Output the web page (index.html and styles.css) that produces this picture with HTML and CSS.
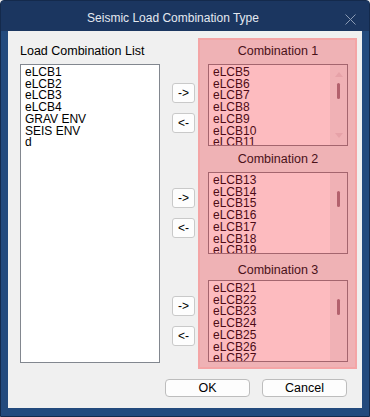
FILE: index.html
```html
<!DOCTYPE html>
<html lang="en">
<head>
  <meta charset="UTF-8" />
  <title>Seismic Load Combination Type</title>
  <link rel="stylesheet" href="styles.css">
</head>
<body>
  <div class="window">
    <div class="titlebar">
      <span class="title">Seismic Load Combination Type</span>
      <svg class="close" width="11" height="11" viewBox="0 0 11 11">
        <path d="M0.5 0.5 L10.5 10.5 M10.5 0.5 L0.5 10.5" stroke="#8b9bb4" stroke-width="1" fill="none"/>
      </svg>
    </div>

    <div class="content">
      <div class="main">
        <div class="source">
          <div class="label">Load Combination List</div>
          <div class="list list-white">
            <div class="items">
              <div>eLCB1</div>
              <div>eLCB2</div>
              <div>eLCB3</div>
              <div>eLCB4</div>
              <div>GRAV ENV</div>
              <div>SEIS ENV</div>
              <div>d</div>
            </div>
          </div>
        </div>

        <div class="movers">
          <div class="pair pair-first">
            <button class="move">-&gt;</button>
            <button class="move">&lt;-</button>
          </div>
          <div class="pair">
            <button class="move">-&gt;</button>
            <button class="move">&lt;-</button>
          </div>
          <div class="pair">
            <button class="move">-&gt;</button>
            <button class="move">&lt;-</button>
          </div>
        </div>

        <div class="panel">
          <div class="group">
            <div class="glabel">Combination 1</div>
            <div class="list list-pink">
              <div class="items">
                <div>eLCB5</div>
                <div>eLCB6</div>
                <div>eLCB7</div>
                <div>eLCB8</div>
                <div>eLCB9</div>
                <div>eLCB10</div>
                <div>eLCB11</div>
              </div>
              <div class="scrollbar">
                <span class="arrow arrow-up"></span>
                <span class="thumb"></span>
                <span class="arrow arrow-down"></span>
              </div>
            </div>
          </div>

          <div class="group">
            <div class="glabel">Combination 2</div>
            <div class="list list-pink">
              <div class="items">
                <div>eLCB13</div>
                <div>eLCB14</div>
                <div>eLCB15</div>
                <div>eLCB16</div>
                <div>eLCB17</div>
                <div>eLCB18</div>
                <div>eLCB19</div>
              </div>
              <div class="scrollbar">
                <span class="thumb thumb-plain"></span>
              </div>
            </div>
          </div>

          <div class="group">
            <div class="glabel">Combination 3</div>
            <div class="list list-pink">
              <div class="items">
                <div>eLCB21</div>
                <div>eLCB22</div>
                <div>eLCB23</div>
                <div>eLCB24</div>
                <div>eLCB25</div>
                <div>eLCB26</div>
                <div>eLCB27</div>
              </div>
              <div class="scrollbar">
                <span class="thumb thumb-plain"></span>
              </div>
            </div>
          </div>
        </div>
      </div>

      <div class="actions">
        <button class="action">OK</button>
        <button class="action">Cancel</button>
      </div>
    </div>
  </div>
</body>
</html>
```

FILE: styles.css
```css
body {
  margin: 0;
  font-family: 'Liberation Sans', Arial, sans-serif;
  background: #f0f0f0;
}

.window {
  width: 370px;
  height: 417px;
  box-sizing: border-box;
  border: 1px solid #142a4c;
  border-radius: 4px 4px 0 0;
  background: #234a7d;
  display: flex;
  flex-direction: column;
  overflow: hidden;
}

.titlebar {
  height: 30px;
  flex-shrink: 0;
  background: #1b3660;
  display: flex;
  align-items: flex-start;
}

.title {
  flex: 1;
  text-align: center;
  font-size: 12px;
  line-height: 12px;
  margin-top: 11px;
  color: #e4e9f1;
}

.close {
  margin: 13px 13px 0 0;
}

.content {
  flex: 1;
  margin: 0 7px 8px 7px;
  background: #f0f0f0;
  padding: 7px 5px 0 12px;
  display: flex;
  flex-direction: column;
}

.main {
  display: flex;
  height: 331px;
}

/* left column */
.source {
  width: 140px;
  display: flex;
  flex-direction: column;
}

.label {
  height: 26px;
  line-height: 26px;
  font-size: 12.5px;
  color: #000;
}

.list {
  box-sizing: border-box;
  display: flex;
  overflow: hidden;
}

.list-white {
  height: 299px;
  background: #fff;
  border: 1px solid #82878f;
  color: #000;
}

.items {
  flex: 1;
  padding: 2px 0 0 4px;
  font-size: 12px;
  line-height: 11.7px;
  white-space: nowrap;
  overflow: hidden;
}

/* move buttons */
.movers {
  width: 23px;
  margin: 0 3px 0 12px;
  padding-top: 26px;
  display: flex;
  flex-direction: column;
  gap: 26px;
}

.pair {
  height: 82px;
  box-sizing: border-box;
  display: flex;
  flex-direction: column;
  justify-content: center;
  gap: 10px;
}

.pair-first {
  padding-top: 5px;
}

.move {
  width: 23px;
  height: 20px;
  padding: 0;
  border: 1px solid #c9c9c9;
  border-radius: 3px;
  background: #fdfdfd;
  font-family: 'Liberation Sans', Arial, sans-serif;
  font-size: 12px;
  color: #000;
}

/* pink panel */
.panel {
  width: 159px;
  box-sizing: border-box;
  border: 2px solid #f4a5a6;
  background: #efb2b5;
  padding: 0 7px 5px 8px;
  display: flex;
  flex-direction: column;
}

.glabel {
  height: 26px;
  line-height: 26px;
  text-align: center;
  font-size: 12.5px;
  color: #4a1119;
}

.group:first-child .glabel {
  height: 24px;
  line-height: 22px;
}

.group:last-child .glabel {
  box-sizing: border-box;
  padding-top: 6px;
  line-height: 20px;
}

.list-pink {
  height: 82px;
  background: #fdbbbf;
  border: 1px solid #a4656e;
  color: #4d0b16;
}

.scrollbar {
  width: 17px;
  background: #f0b1b5;
  display: flex;
  flex-direction: column;
  align-items: center;
}

.thumb {
  width: 3px;
  height: 16px;
  border-radius: 1.5px;
  background: #b3616d;
  margin-top: 6px;
}

.thumb-plain {
  margin-top: 18px;
}

.arrow {
  width: 0;
  height: 0;
  border-left: 4px solid transparent;
  border-right: 4px solid transparent;
}

.arrow-up {
  margin-top: 7px;
  border-bottom: 5px solid #e6a2a8;
}

.arrow-down {
  margin-top: auto;
  margin-bottom: 7px;
  border-top: 5px solid #e6a2a8;
}

/* dialog buttons */
.actions {
  display: flex;
  justify-content: flex-end;
  gap: 12px;
  margin-top: 10px;
  padding-right: 10px;
}

.action {
  width: 85px;
  height: 18px;
  padding: 0;
  border: 1px solid #bdbdbd;
  border-radius: 4px;
  background: #fdfdfd;
  font-family: 'Liberation Sans', Arial, sans-serif;
  font-size: 12.5px;
  color: #000;
}
```
